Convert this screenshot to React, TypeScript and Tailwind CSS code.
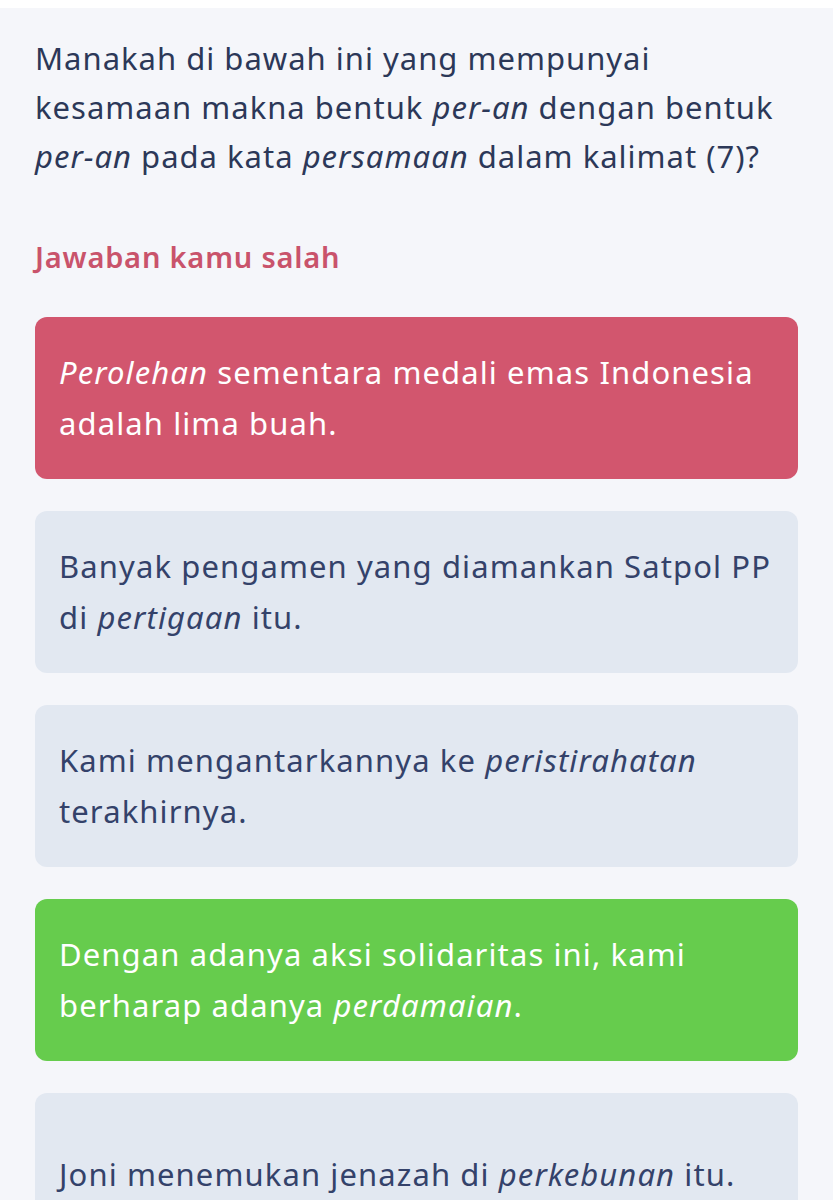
import React from 'react';

type Option = {
  parts: { text: string; italic?: boolean }[];
  state?: 'wrong' | 'right';
};

const options: Option[] = [
  {
    state: 'wrong',
    parts: [{ text: 'Perolehan', italic: true }, { text: ' sementara medali emas Indonesia adalah lima buah.' }],
  },
  {
    parts: [{ text: 'Banyak pengamen yang diamankan Satpol PP di ' }, { text: 'pertigaan', italic: true }, { text: ' itu.' }],
  },
  {
    parts: [{ text: 'Kami mengantarkannya ke ' }, { text: 'peristirahatan', italic: true }, { text: ' terakhirnya.' }],
  },
  {
    state: 'right',
    parts: [{ text: 'Dengan adanya aksi solidaritas ini, kami berharap adanya ' }, { text: 'perdamaian', italic: true }, { text: '.' }],
  },
  {
    parts: [{ text: 'Joni menemukan jenazah di ' }, { text: 'perkebunan', italic: true }, { text: ' itu.' }],
  },
];

const OptionCard: React.FC<{ option: Option }> = ({ option }) => {
  const tone =
    option.state === 'wrong'
      ? 'bg-[#d2566e] text-white'
      : option.state === 'right'
        ? 'bg-[#66cc4d] text-white'
        : 'bg-[#e2e8f1] text-[#34426a]';
  return (
    <div className={`rounded-xl px-6 min-h-[162px] flex items-center ${tone}`}>
      <p className="text-[31px] leading-[51px] tracking-[1.1px]">
        {option.parts.map((p, i) => (p.italic ? <em key={i}>{p.text}</em> : <span key={i}>{p.text}</span>))}
      </p>
    </div>
  );
};

export default function App() {
  return (
    <div className="min-h-screen bg-white font-['Noto_Sans','Lato',sans-serif]">
      <div className="mt-2 bg-[#f5f6fa] px-[35px] pt-[26px] pb-10 min-h-[1192px]">
        <p className="text-[31px] leading-[49px] tracking-[1px] text-[#2c3858]">
          Manakah di bawah ini yang mempunyai kesamaan makna bentuk <em>per-an</em> dengan bentuk <em>per-an</em> pada kata{' '}
          <em>persamaan</em> dalam kalimat (7)?
        </p>
        <h2 className="mt-[58px] text-[29px] leading-9 font-semibold tracking-[0.8px] text-[#c9536b]">Jawaban kamu salah</h2>
        <div className="mt-[42px] flex flex-col gap-8">
          {options.map((o, i) => (
            <OptionCard key={i} option={o} />
          ))}
        </div>
      </div>
    </div>
  );
}
